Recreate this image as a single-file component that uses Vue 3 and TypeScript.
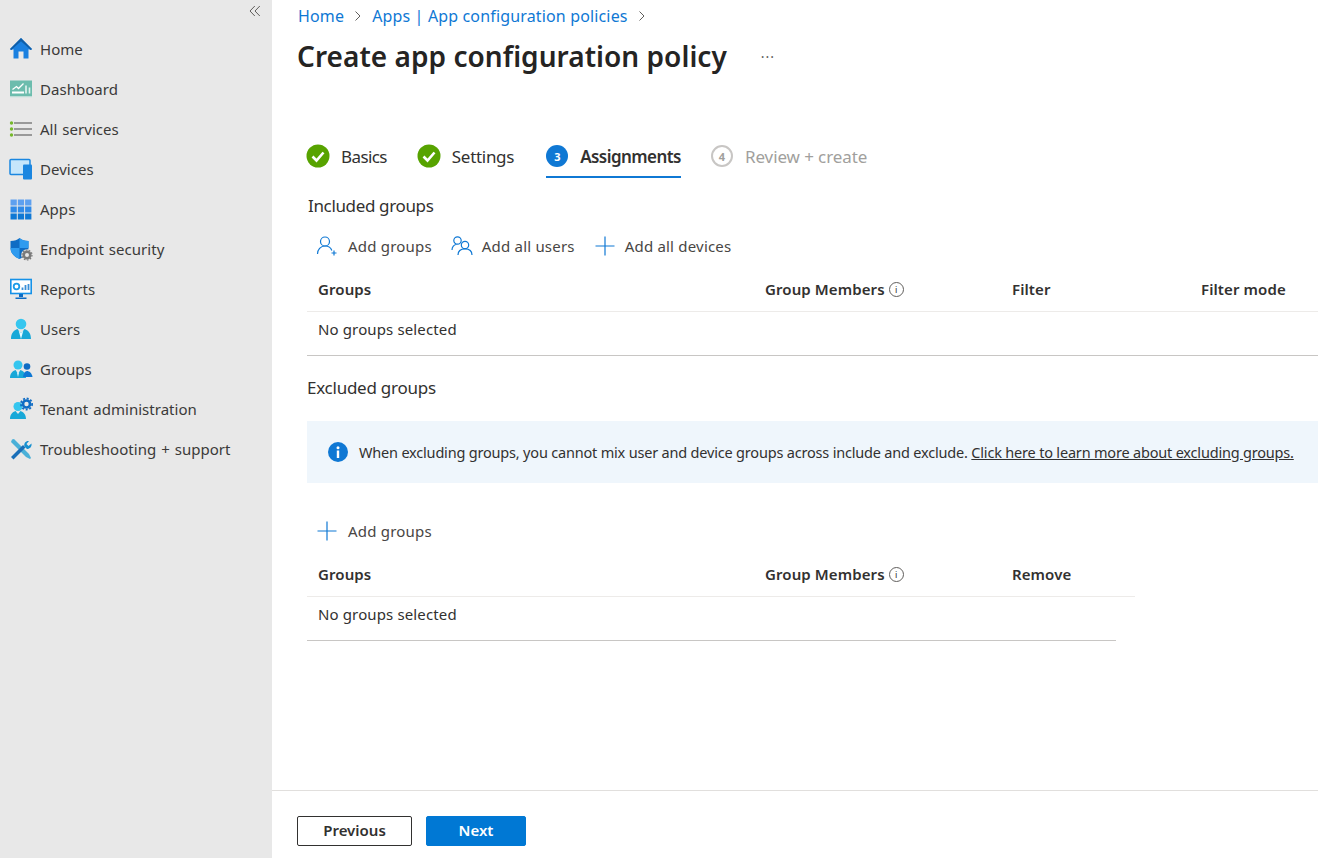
<script setup lang="ts">
const navItems: string[] = [
  'Home', 'Dashboard', 'All services', 'Devices', 'Apps', 'Endpoint security',
  'Reports', 'Users', 'Groups', 'Tenant administration', 'Troubleshooting + support',
]
</script>

<template>
  <div class="app">
    <aside class="side">
      <div class="collapse">
        <svg width="12" height="12" viewBox="0 0 12 12" fill="none" stroke="#605e5c" stroke-width="1">
          <path d="M5.8 1 1 6l4.8 5M10.8 1 6 6l4.8 5" />
        </svg>
      </div>
      <nav class="nav">
        <a v-for="item in navItems" :key="item" class="nav-item">
          <svg class="nav-icon" width="24" height="24" viewBox="0 0 24 24">
            <template v-if="item === 'Home'">
              <path d="M12 1 1 12l1 1 2.500-.8V21.500h5v-7h5v7h5v-9.300l2.500.8 1-1z" fill="#1a80e0" />
              <path d="M12 1 1 12l1.200 1L12 4.300l9.800 8.700 1.200-1z" fill="#0f5ea8" />
            </template>
            <template v-else-if="item === 'Dashboard'">
              <rect x="1" y="3.500" width="22" height="16" fill="#6cbcad" />
              <rect x="1" y="19.500" width="22" height="1" fill="#cfe6e1" />
              <path d="M3.500 12.500l4-3 2 2 5-5" stroke="#fff" stroke-width="1.300" fill="none" />
              <path d="M3 15.500h12" stroke="#fff" stroke-width="2" />
              <path d="M17 8.500v8M20.500 10.500v6" stroke="#e4f3f0" stroke-width="1.600" />
            </template>
            <template v-else-if="item === 'All services'">
              <path d="M5 6h18M5 12h18M5 18h18" stroke="#7f7f7f" stroke-width="1.700" />
              <circle cx="2.500" cy="6" r="1.700" fill="#76b82a" />
              <circle cx="2.500" cy="12" r="1.700" fill="#76b82a" />
              <circle cx="2.500" cy="18" r="1.700" fill="#76b82a" />
            </template>
            <template v-else-if="item === 'Devices'">
              <rect x="1" y="2.500" width="20" height="15" rx="1" fill="#c6e6fb" stroke="#1a86e0" stroke-width="1.500" />
              <rect x="14" y="7.500" width="9" height="15" rx="1" fill="#1a86e0" />
            </template>
            <template v-else-if="item === 'Apps'">
              <rect x="1.500" y="2.500" width="6.300" height="6" fill="#5ea0ef" />
              <rect x="8.800" y="2.500" width="6.300" height="6" fill="#5ea0ef" />
              <rect x="16.100" y="2.500" width="6.300" height="6" fill="#5ea0ef" />
              <rect x="1.500" y="9.500" width="6.300" height="6" fill="#2f8ae8" />
              <rect x="8.800" y="9.500" width="6.300" height="6" fill="#2f8ae8" />
              <rect x="16.100" y="9.500" width="6.300" height="6" fill="#2f8ae8" />
              <rect x="1.500" y="16.500" width="6.300" height="6" fill="#0f78d4" />
              <rect x="8.800" y="16.500" width="6.300" height="6" fill="#0f78d4" />
              <rect x="16.100" y="16.500" width="6.300" height="6" fill="#0f78d4" />
            </template>
            <template v-else-if="item === 'Endpoint security'">
              <path d="M10.500 1c-2 2-5 3-9 3v7c0 5 4 9 9 11 5-2 9-6 9-11V4c-4 0-7-1-9-3z" fill="#0f6cc4" />
              <path d="M10.500 1c2 2 5 3 9 3v7H10.500zM10.500 11H1.500c0 5 4 9 9 11z" fill="#2f9bef" />
              <circle cx="18" cy="18" r="5.800" fill="#e8e8e8" />
              <circle cx="18" cy="18" r="3.300" fill="none" stroke="#7a7a7a" stroke-width="2.600" />
              <circle cx="18" cy="18" r="5" fill="none" stroke="#7a7a7a" stroke-width="1.200" stroke-dasharray="1.600 1.500" />
            </template>
            <template v-else-if="item === 'Reports'">
              <rect x="1.800" y="2.500" width="20.400" height="14" fill="#fff" stroke="#1692e8" stroke-width="1.600" />
              <circle cx="7.500" cy="9.500" r="2.800" fill="none" stroke="#1a9be8" stroke-width="1.800" />
              <path d="M13.500 13v-2.500M16.500 13V8M19.500 13V7" stroke="#3a8fd8" stroke-width="1.800" />
              <path d="M10 17h4v3h-4z" fill="#0f6cc4" />
              <path d="M6.500 20.500h11V22h-11z" fill="#0f6cc4" />
            </template>
            <template v-else-if="item === 'Users'">
              <circle cx="12" cy="7" r="5.300" fill="#35c6ef" />
              <path d="M2 22c0-6 3-9 6.500-10l3.500 4 3.500-4c3.500 1 6.500 4 6.500 10z" fill="#18a8d8" />
              <path d="M9.500 13 12 16l2.500-3-2.500 9z" fill="#e7fbff" />
            </template>
            <template v-else-if="item === 'Groups'">
              <circle cx="9" cy="8" r="4.500" fill="#35c6ef" />
              <path d="M1 21c0-4.500 2.500-7 5.500-8l2.500 3 2.500-3c3 1 5.500 3.500 5.500 8z" fill="#18a8d8" />
              <path d="M7.500 13.500 9 16l1.500-2.500L9 20z" fill="#e7fbff" />
              <circle cx="18" cy="9.500" r="3.300" fill="#0f6cc4" />
              <path d="M14 20c.5-4 2-6 4-6s5 2 5.500 6z" fill="#0f78d4" />
            </template>
            <template v-else-if="item === 'Tenant administration'">
              <circle cx="9" cy="9.500" r="4.500" fill="#35c6ef" />
              <path d="M1 22c0-4.500 2.500-7 5.500-8l2.500 3 2.500-3c3 1 5.500 3.500 5.500 8z" fill="#18a8d8" />
              <circle cx="17.500" cy="7" r="3.500" fill="none" stroke="#0f6cc4" stroke-width="2.600" />
              <circle cx="17.500" cy="7" r="5.600" fill="none" stroke="#0f6cc4" stroke-width="1.800" stroke-dasharray="2 1.700" />
            </template>
            <template v-else>
              <path d="M3 2.500 5 2l15 15 2 4-1 1-4-2L2 5z" fill="#4ab0d8" />
              <path d="M2 20 14 8l2.500 2.500L4.500 22.500z" fill="#1a6fb8" />
              <path d="M15.500 9.500l2.500 2.500c3 0 5-2.500 4.500-5.500L19.500 9 17.500 7l2.500-3c-3-.5-5.500 2-4.500 5.500z" fill="#1790d0" />
            </template>
          </svg>
          <span>{{ item }}</span>
        </a>
      </nav>
    </aside>

    <main class="main">
      <div class="content">
        <div class="crumbs">
          <a>Home</a>
          <svg width="10" height="12" viewBox="0 0 10 12" fill="none" stroke="#605e5c"><path d="M2.500 1.500 7 6l-4.500 4.500" /></svg>
          <a>Apps | App configuration policies</a>
          <svg width="10" height="12" viewBox="0 0 10 12" fill="none" stroke="#605e5c"><path d="M2.500 1.500 7 6l-4.500 4.500" /></svg>
        </div>
        <div class="title-row">
          <h1>Create app configuration policy</h1>
          <span class="more">···</span>
        </div>

        <div class="tabs">
          <div class="tab t-basics">
            <svg width="24" height="24" viewBox="0 0 24 24"><circle cx="12" cy="12" r="11.500" fill="#57a300" /><path d="M6.500 12.500 10.500 16.500 17.500 8.500" fill="none" stroke="#fff" stroke-width="2.600" /></svg>
            <span>Basics</span>
          </div>
          <div class="tab">
            <svg width="24" height="24" viewBox="0 0 24 24"><circle cx="12" cy="12" r="11.500" fill="#57a300" /><path d="M6.500 12.500 10.500 16.500 17.500 8.500" fill="none" stroke="#fff" stroke-width="2.600" /></svg>
            <span>Settings</span>
          </div>
          <div class="tab active">
            <span class="step step-on">3</span>
            <span>Assignments</span>
          </div>
          <div class="tab off">
            <span class="step step-off">4</span>
            <span>Review + create</span>
          </div>
        </div>

        <section class="block">
          <h2 class="h-included">Included groups</h2>
          <div class="actions">
            <button class="action">
              <svg width="22" height="22" viewBox="0 0 22 22" fill="none" stroke="#0f78d4" stroke-width="1.200">
                <circle cx="9" cy="6.500" r="4.500" />
                <path d="M1.500 19c0-4.500 3-8 7.500-8s6 2 6.800 4.500" />
                <path d="M18 15.500v5M15.500 18h5" />
              </svg>
              <span>Add groups</span>
            </button>
            <button class="action">
              <svg width="22" height="22" viewBox="0 0 22 22" fill="none" stroke="#0f78d4" stroke-width="1.200">
                <circle cx="6.500" cy="5.500" r="3.700" />
                <circle cx="14" cy="10" r="3.700" />
                <path d="M1 15c0-3 2-5.500 4.500-5.500M7 20c0-4 3-6.200 7-6.200s7 2.200 7 6.200" />
              </svg>
              <span>Add all users</span>
            </button>
            <button class="action">
              <svg width="22" height="22" viewBox="0 0 22 22" fill="none" stroke="#0f78d4" stroke-width="1.200">
                <path d="M11 1.500v19M1.500 11h19" />
              </svg>
              <span>Add all devices</span>
            </button>
          </div>
          <div class="thead cols-four">
            <span>Groups</span>
            <span class="with-info">Group Members <i class="info">i</i></span>
            <span>Filter</span>
            <span>Filter mode</span>
          </div>
          <div class="tbody">No groups selected</div>
        </section>

        <section class="block excluded">
          <h2>Excluded groups</h2>
          <div class="banner">
            <svg width="22" height="22" viewBox="0 0 22 22">
              <circle cx="11" cy="11" r="10" fill="#0f78d4" />
              <rect x="9.800" y="9.500" width="2.400" height="7.500" fill="#fff" />
              <circle cx="11" cy="6.800" r="1.500" fill="#fff" />
            </svg>
            <span>When excluding groups, you cannot mix user and device groups across include and exclude. <a>Click here to learn more about excluding groups.</a></span>
          </div>
          <div class="actions second">
            <button class="action">
              <svg width="22" height="22" viewBox="0 0 22 22" fill="none" stroke="#0f78d4" stroke-width="1.200">
                <path d="M11 1.500v19M1.500 11h19" />
              </svg>
              <span>Add groups</span>
            </button>
          </div>
          <div class="thead cols-three">
            <span>Groups</span>
            <span class="with-info">Group Members <i class="info">i</i></span>
            <span>Remove</span>
          </div>
          <div class="tbody short">No groups selected</div>
        </section>
      </div>
      <footer class="foot">
        <button class="btn">Previous</button>
        <button class="btn primary">Next</button>
      </footer>
    </main>
  </div>
</template>

<style>
html, body { margin: 0; padding: 0; background: #fff; }
</style>

<style scoped>
* { box-sizing: border-box; }
.app {
  display: flex;
  width: 1318px;
  height: 858px;
  overflow: hidden;
  font-family: "Noto Sans", "Open Sans", sans-serif;
  font-size: 15px;
  color: #323130;
  background: #fff;
}
.side {
  flex: 0 0 272px;
  background: #e8e8e8;
  display: flex;
  flex-direction: column;
}
.collapse {
  height: 29px;
  display: flex;
  justify-content: flex-end;
  align-items: flex-start;
  padding: 5px 11px 0 0;
}
.nav { display: flex; flex-direction: column; }
.nav-item {
  height: 40px;
  display: flex;
  align-items: center;
  gap: 7px;
  padding-left: 9px;
  color: #3b3a39;
  letter-spacing: 0.03px;
  word-spacing: 1px;
}
.nav-icon { flex: none; }
.main {
  flex: 1;
  min-width: 0;
  display: flex;
  flex-direction: column;
}
.content {
  flex: 1;
  min-height: 0;
  overflow: hidden;
  padding-left: 25px;
}
.crumbs {
  height: 32px;
  display: flex;
  align-items: center;
  gap: 9px;
  padding-left: 1px;
  font-size: 16px;
  color: #0f78d4;
  letter-spacing: 0.15px;
}
h1 {
  margin: 0;
  font-size: 28px;
  font-weight: 600;
  line-height: 38px;
  color: #252423;
  letter-spacing: 0.04px;
}
.title-row {
  height: 50px;
  display: flex;
  align-items: center;
  padding-bottom: 2px;
  gap: 34px;
}
.more { color: #605e5c; font-size: 14px; letter-spacing: 1px; }
.tabs {
  margin-top: 48px;
  margin-left: 9px;
  display: flex;
  gap: 30px;
  height: 64px;
}
.tab {
  display: flex;
  align-items: center;
  gap: 11px;
  height: 48px;
  padding-top: 4px;
  font-size: 17px;
  letter-spacing: -0.3px;
  color: #323130;
}
.t-basics { letter-spacing: -0.6px; }
.tab.active {
  font-weight: 600;
  border-bottom: 2px solid #0f78d4;
  padding-top: 6px;
  margin-left: 2px;
  gap: 12px;
  letter-spacing: -0.55px;
}
.tab.off { color: #a19f9d; gap: 12px; letter-spacing: -0.1px; }
.step {
  width: 22px;
  height: 22px;
  border-radius: 50%;
  display: flex;
  align-items: center;
  justify-content: center;
  font-size: 11px;
  font-weight: 700;
}
.step-on { background: #0f78d4; color: #fff; }
.step-off { border: 2px solid #c8c6c4; color: #a19f9d; }
.block { margin-left: 10px; }
h2 {
  margin: 0;
  font-size: 17px;
  font-weight: 400;
  line-height: 24px;
  letter-spacing: -0.25px;
  color: #323130;
}
.h-included { letter-spacing: -0.35px; padding-left: 1px; }
.actions {
  margin-top: 12px;
  height: 32px;
  display: flex;
  align-items: center;
  gap: 10px;
}
.action {
  display: flex;
  align-items: center;
  gap: 9px;
  border: 0;
  padding: 0 0 0 9px;
  background: none;
  font: inherit;
  font-size: 15px;
  letter-spacing: 0.2px;
  color: #484644;
}
.action:first-child { gap: 10px; }
.thead {
  height: 41px;
  margin-top: 9px;
  display: grid;
  align-items: center;
  padding-left: 11px;
  padding-bottom: 4px;
  border-bottom: 1px solid #edebe9;
  font-weight: 600;
  font-size: 15px;
  letter-spacing: 0.1px;
}
.cols-four { grid-template-columns: 447px 247px 189px 1fr; }
.cols-three { grid-template-columns: 447px 247px 1fr; width: 828px; }
.with-info { display: flex; align-items: center; gap: 4px; }
.info {
  width: 15px;
  height: 15px;
  border: 1px solid #605e5c;
  border-radius: 50%;
  font: normal 9px/13px "Noto Sans", sans-serif;
  text-align: center;
  font-weight: 400;
  letter-spacing: 0;
}
.tbody {
  height: 44px;
  display: flex;
  align-items: center;
  padding-left: 11px;
  padding-bottom: 9px;
  border-bottom: 1px solid #c8c6c4;
  font-size: 15px;
  letter-spacing: 0.13px;
}
.tbody.short { width: 809px; }
.excluded { margin-top: 20px; }
.banner {
  margin-top: 21px;
  height: 62px;
  background: #eff6fc;
  display: flex;
  align-items: center;
  gap: 10px;
  padding: 0 0 0 20px;
  font-size: 14.5px;
  letter-spacing: -0.19px;
  color: #323130;
}
.banner a { color: #323130; text-decoration: underline; }
.actions.second { margin-top: 32px; }
.foot {
  flex: 0 0 68px;
  border-top: 1px solid #e1dfdd;
  display: flex;
  align-items: flex-start;
  gap: 14px;
  padding: 25px 0 0 25px;
}
.btn {
  height: 30px;
  width: 115px;
  border: 1px solid #323130;
  border-radius: 2px;
  background: #fff;
  font: inherit;
  font-weight: 600;
  font-size: 15px;
  color: #323130;
  padding: 0 0 2px;
}
.btn.primary {
  width: 100px;
  background: #0078d4;
  border-color: #0078d4;
  color: #fff;
}
</style>
